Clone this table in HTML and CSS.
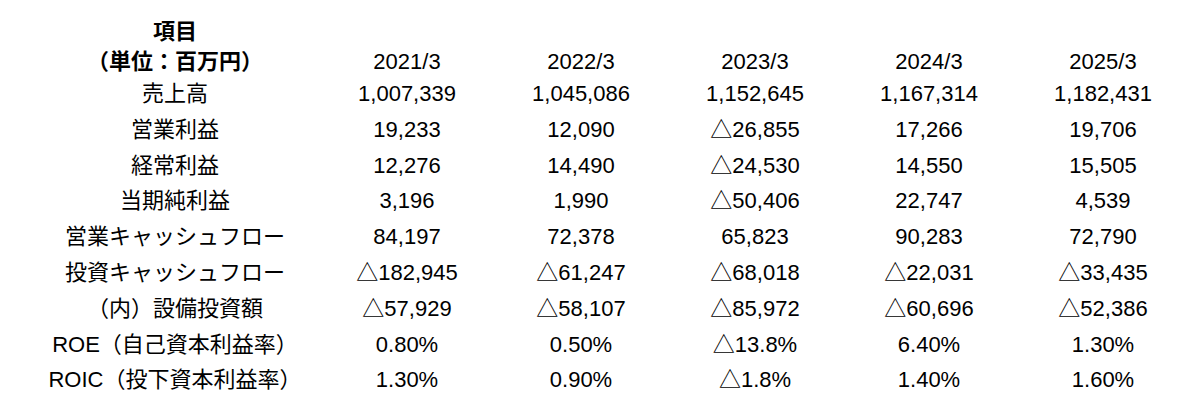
FILE: index.html
```html
<!DOCTYPE html>
<html lang="ja">
<head>
<meta charset="utf-8">
<title>業績推移</title>
<link rel="stylesheet" href="styles.css">
</head>
<body>
<div class="fin">
  <div class="row head">
    <div class="label"><span>項目</span><span>（単位：百万円）</span></div>
    <div class="cell">2021/3</div>
    <div class="cell">2022/3</div>
    <div class="cell">2023/3</div>
    <div class="cell">2024/3</div>
    <div class="cell">2025/3</div>
  </div>
  <div class="row">
    <div class="label">売上高</div>
    <div class="cell">1,007,339</div>
    <div class="cell">1,045,086</div>
    <div class="cell">1,152,645</div>
    <div class="cell">1,167,314</div>
    <div class="cell">1,182,431</div>
  </div>
  <div class="row">
    <div class="label">営業利益</div>
    <div class="cell">19,233</div>
    <div class="cell">12,090</div>
    <div class="cell">△26,855</div>
    <div class="cell">17,266</div>
    <div class="cell">19,706</div>
  </div>
  <div class="row">
    <div class="label">経常利益</div>
    <div class="cell">12,276</div>
    <div class="cell">14,490</div>
    <div class="cell">△24,530</div>
    <div class="cell">14,550</div>
    <div class="cell">15,505</div>
  </div>
  <div class="row">
    <div class="label">当期純利益</div>
    <div class="cell">3,196</div>
    <div class="cell">1,990</div>
    <div class="cell">△50,406</div>
    <div class="cell">22,747</div>
    <div class="cell">4,539</div>
  </div>
  <div class="row">
    <div class="label">営業キャッシュフロー</div>
    <div class="cell">84,197</div>
    <div class="cell">72,378</div>
    <div class="cell">65,823</div>
    <div class="cell">90,283</div>
    <div class="cell">72,790</div>
  </div>
  <div class="row">
    <div class="label">投資キャッシュフロー</div>
    <div class="cell">△182,945</div>
    <div class="cell">△61,247</div>
    <div class="cell">△68,018</div>
    <div class="cell">△22,031</div>
    <div class="cell">△33,435</div>
  </div>
  <div class="row">
    <div class="label">（内）設備投資額</div>
    <div class="cell">△57,929</div>
    <div class="cell">△58,107</div>
    <div class="cell">△85,972</div>
    <div class="cell">△60,696</div>
    <div class="cell">△52,386</div>
  </div>
  <div class="row">
    <div class="label">ROE（自己資本利益率）</div>
    <div class="cell">0.80%</div>
    <div class="cell">0.50%</div>
    <div class="cell">△13.8%</div>
    <div class="cell">6.40%</div>
    <div class="cell">1.30%</div>
  </div>
  <div class="row">
    <div class="label">ROIC（投下資本利益率）</div>
    <div class="cell">1.30%</div>
    <div class="cell">0.90%</div>
    <div class="cell">△1.8%</div>
    <div class="cell">1.40%</div>
    <div class="cell">1.60%</div>
  </div>
</div>
</body>
</html>
```

FILE: styles.css
```css
html, body {
  margin: 0;
  padding: 0;
  background: #ffffff;
}

body {
  color: #000000;
  font-family: "Liberation Sans", "Noto Sans CJK JP", sans-serif;
  font-size: 22px;
}

.fin {
  padding: 17px 0 0 30px;
}

.row {
  display: grid;
  grid-template-columns: 290px repeat(5, 174px);
  height: 35.8px;
  line-height: 35.8px;
  align-items: center;
  text-align: center;
  white-space: nowrap;
}

.head {
  height: 59px;
  line-height: 29.5px;
  align-items: end;
}

.head .label {
  display: flex;
  flex-direction: column;
  align-items: center;
  font-weight: bold;
}
```
